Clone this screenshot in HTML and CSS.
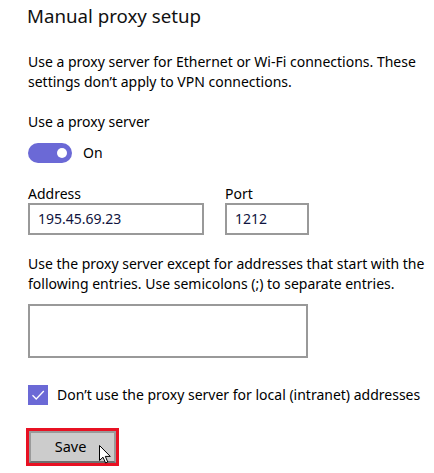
FILE: index.html
```html
<!DOCTYPE html>
<html lang="en">
<head>
<meta charset="utf-8">
<link rel="stylesheet" href="styles.css">
</head>
<body>
<main class="page">
  <h1 class="title">Manual proxy setup</h1>
  <p class="text desc">Use a proxy server for Ethernet or Wi-Fi connections. These<br>settings don’t apply to VPN connections.</p>
  <p class="text label">Use a proxy server</p>
  <div class="toggle-row">
    <span class="toggle"><span class="knob"></span></span>
    <span class="text">On</span>
  </div>
  <div class="fields">
    <div class="field">
      <span class="text">Address</span>
      <div class="input addr">195.45.69.23</div>
    </div>
    <div class="field">
      <span class="text">Port</span>
      <div class="input port">1212</div>
    </div>
  </div>
  <p class="text except">Use the proxy server except for addresses that start with the<br>following entries. Use semicolons (;) to separate entries.</p>
  <div class="input area"></div>
  <div class="check-row">
    <span class="check">
      <svg width="20" height="20" viewBox="0 0 20 20"><path d="M4.5 10.2 L8.2 14 L15.8 6" fill="none" stroke="#fff" stroke-width="1.3"/></svg>
    </span>
    <span class="text">Don’t use the proxy server for local (intranet) addresses</span>
  </div>
  <div class="save-wrap">
    <div class="focus">
      <button class="save">Save</button>
    </div>
    <svg class="cursor" width="13" height="19" viewBox="0 0 13 19"><path d="M0.5 0.5 L0.5 15.5 L4 12.2 L6.6 18 L8.8 17 L6.3 11.4 L11.3 11.4 Z" fill="#fff" stroke="#000" stroke-width="1" stroke-linejoin="round"/></svg>
  </div>
</main>
</body>
</html>
```
FILE: styles.css
```css
* { box-sizing: border-box; }
html, body { margin: 0; padding: 0; background: #fff; }
body {
  font-family: "Segoe UI", "Noto Sans", "Open Sans", sans-serif;
  color: #000;
  width: 434px;
  height: 473px;
  overflow: hidden;
}
.page {
  padding: 0 0 0 28px;
  display: flex;
  flex-direction: column;
  align-items: flex-start;
}
.text {
  font-size: 14px;
  line-height: 20px;
  margin: 0;
  white-space: nowrap;
}
.title {
  font-size: 18.7px;
  font-weight: 400;
  line-height: 28px;
  margin: 2px 0 0 -1px;
  color: #111;
}
.desc { margin-top: 22px; }
.label { margin-top: 20px; }
.toggle-row {
  display: flex;
  align-items: center;
  gap: 11px;
  margin-top: 11px;
}
.toggle {
  width: 44px;
  height: 20px;
  border-radius: 10px;
  background: #6b69d6;
  display: flex;
  align-items: center;
  justify-content: flex-end;
  padding-right: 5px;
}
.knob {
  width: 10px;
  height: 10px;
  border-radius: 50%;
  background: #fff;
}
.fields {
  display: flex;
  gap: 21px;
  margin-top: 22px;
}
.field {
  display: flex;
  flex-direction: column;
}
.field .text { line-height: 18px; }
.input {
  border: 2px solid #999;
  height: 32px;
  padding: 0 8px;
  font-size: 14px;
  line-height: 28px;
  color: #0f1440;
  background: #fff;
}
.addr { width: 176px; }
.port { width: 84px; }
.except { margin-top: 19px; }
.area {
  width: 280px;
  height: 54px;
  margin-top: 10px;
}
.check-row {
  display: flex;
  align-items: center;
  gap: 9px;
  margin-top: 27px;
}
.check {
  width: 20px;
  height: 20px;
  background: #6b69d6;
  display: block;
}
.check svg { display: block; }
.save-wrap {
  position: relative;
  margin-top: 23px;
  margin-left: -2px;
}
.focus {
  border: 3px solid #e81123;
  padding: 0;
}
.save {
  display: block;
  width: 87px;
  height: 32px;
  background: #cccccc;
  border: 2px solid #9a9a9a;
  border-bottom-color: #6f6f6f;
  font-family: inherit;
  font-size: 14.5px;
  color: #000;
  padding: 0 0 2px 0;
  text-indent: -4px;
}
.cursor {
  position: absolute;
  left: 73px;
  top: 17px;
}
```
